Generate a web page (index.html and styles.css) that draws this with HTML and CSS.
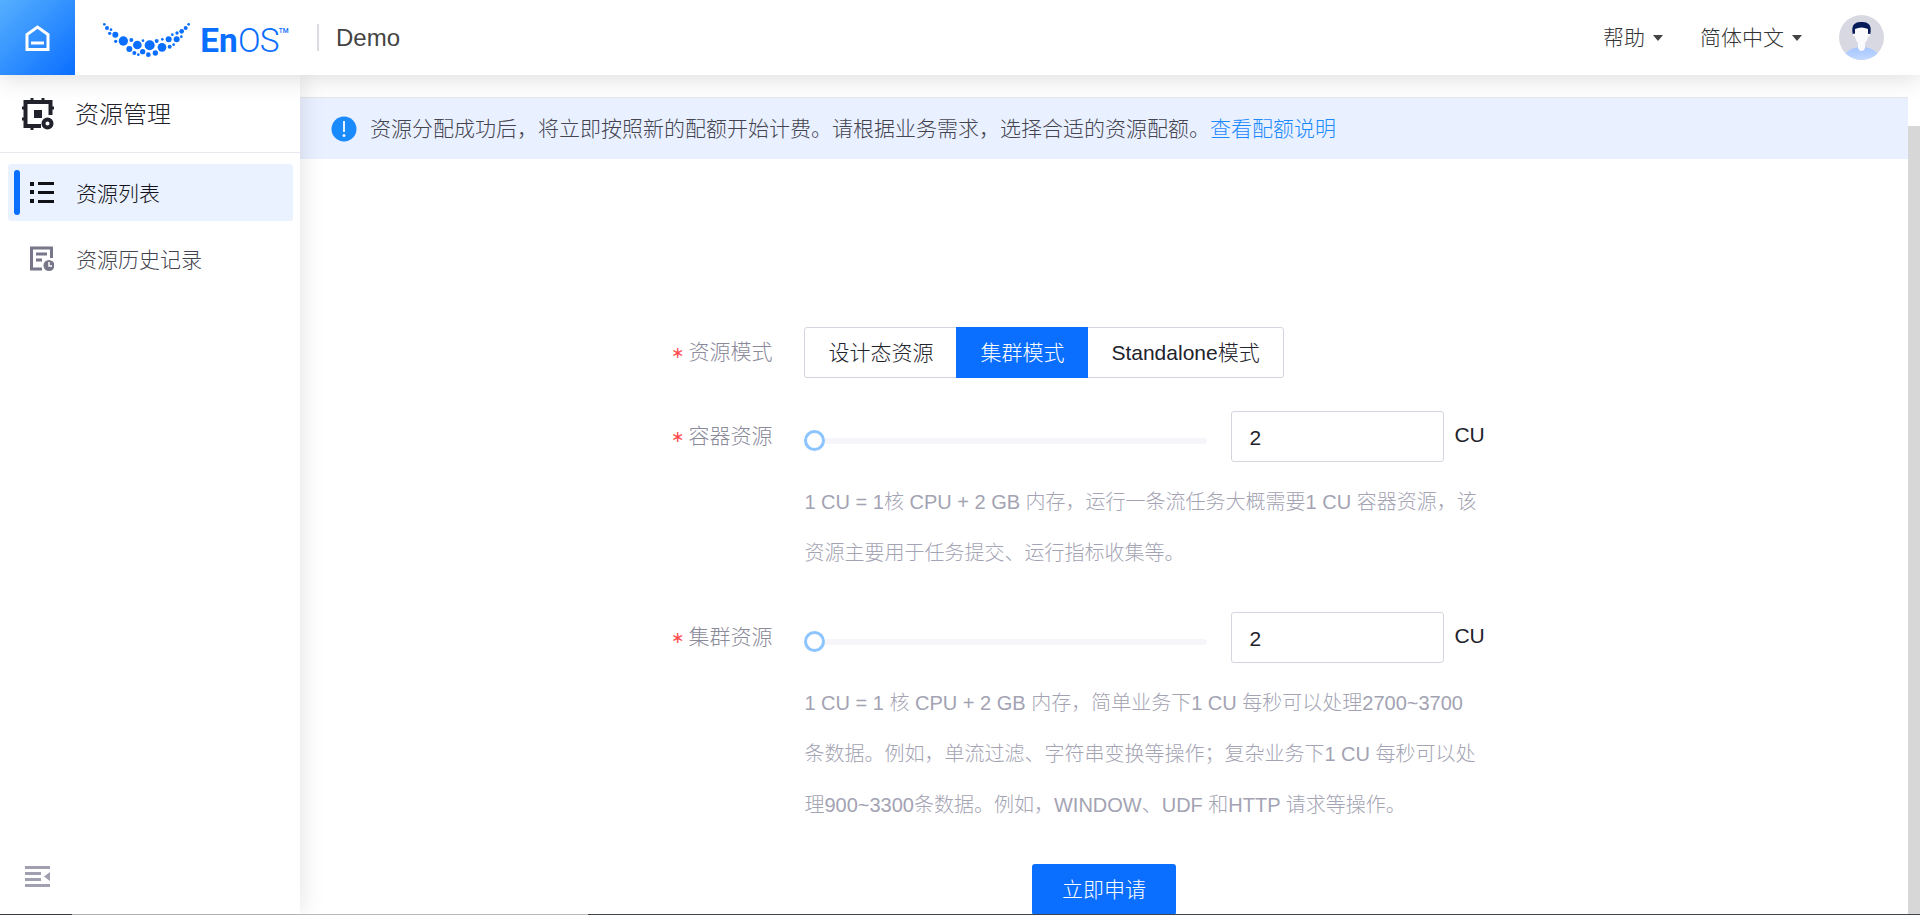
FILE: index.html
```
<!DOCTYPE html>
<html lang="zh-CN">
<head>
<meta charset="utf-8">
<meta name="viewport" content="width=device-width, initial-scale=1">
<title>EnOS 资源管理</title>
<link rel="stylesheet" href="styles.css">
</head>
<body>
<div class="app">
  <header class="topbar">
    <a class="home" href="#" aria-label="首页">
      <svg width="25" height="26" viewBox="0 0 25 26" fill="none" stroke="#fff"><path d="M2 24.500V9.500L12.500 2 23 9.500V24.500Z" stroke-width="3"/><path d="M6 18H19" stroke-width="3"/></svg>
    </a>
    <svg class="logo" width="192" height="40" viewBox="300 60 576 120" role="img" aria-label="EnOS">
      <g fill="#0a6eff">
        <circle cx="313" cy="73" r="4"/><circle cx="321" cy="84" r="6"/><circle cx="333" cy="89" r="4"/><circle cx="329" cy="100" r="5"/>
        <circle cx="346" cy="104" r="9"/><circle cx="347" cy="124" r="5"/><circle cx="370" cy="123" r="14"/><circle cx="394" cy="120" r="6"/>
        <circle cx="388" cy="147" r="9"/><circle cx="412" cy="135" r="13"/><circle cx="403" cy="159" r="6"/><circle cx="429" cy="122" r="4"/>
        <circle cx="415" cy="164" r="4"/><circle cx="428" cy="155" r="8"/><circle cx="449" cy="136" r="15"/><circle cx="445" cy="164" r="7"/>
        <circle cx="470" cy="123" r="6"/><circle cx="466" cy="159" r="8"/><circle cx="486" cy="142" r="13"/><circle cx="487" cy="118" r="4"/>
        <circle cx="506" cy="118" r="9"/><circle cx="509" cy="140" r="6"/><circle cx="517" cy="104" r="4"/><circle cx="530" cy="118" r="9"/>
        <circle cx="521" cy="134" r="4"/><circle cx="531" cy="99" r="5"/><circle cx="545" cy="94" r="7"/><circle cx="544" cy="110" r="4"/>
        <circle cx="557" cy="84" r="6"/><circle cx="566" cy="73" r="4"/>
      </g>
      <text class="logo-bold" x="601" y="155">En</text>
      <text class="logo-light" x="714" y="155">O</text>
      <text class="logo-light" x="779" y="155">S</text>
      <text class="logo-tm" x="836" y="99">TM</text>
    </svg>
    <span class="divider"></span>
    <span class="org">Demo</span>
    <nav class="tools">
      <button class="menu" type="button">帮助<span class="caret"></span></button>
      <button class="menu" type="button">简体中文<span class="caret"></span></button>
      <button class="avatar" type="button" aria-label="用户">
        <svg width="45" height="45" viewBox="0 0 45 45">
          <defs>
            <clipPath id="disc"><circle cx="22.500" cy="22.500" r="22.500"/></clipPath>
            <linearGradient id="shirt" x2="0" y2="1"><stop stop-color="#a3c5ff"/><stop offset="1" stop-color="#c3d9ff"/></linearGradient>
          </defs>
          <g clip-path="url(#disc)">
            <rect width="45" height="45" fill="#d8d8e2"/>
            <path d="M6 45V39Q12 32 22.500 32T39 39V45Z" fill="url(#shirt)"/>
            <path d="M14 20C11 8 18 7 22.500 7S34 8 31 20L29 22H16Z" fill="#061c59"/>
            <path d="M16 14Q22.500 11 29 14V19Q32 18 31 21 30 22 29 22 28 26 26 28V33Q25 36 22.500 36T19 33V28Q17 26 16 22 13 21 14 19 15 18 16 19Z" fill="#fafafc"/>
          </g>
        </svg>
      </button>
    </nav>
  </header>
  <div class="body">
    <aside class="sidebar">
      <div class="side-title">
        <svg width="32" height="32" viewBox="0 0 32 32" fill="none" stroke="#22222c">
          <path d="M19 28H3.500V4H28.500V17" stroke-width="4"/>
          <path d="M10 0V3M21 0V3M0 10H3M0 21H3M10 28V32M29 10H32" stroke-width="3"/>
          <rect x="12" y="12" width="8" height="8" fill="#22222c" stroke="none"/>
          <circle cx="25.500" cy="25.500" r="4" stroke-width="4"/>
        </svg>
        <h1>资源管理</h1>
      </div>
      <nav class="side-nav">
        <a class="nav-item active" href="#" aria-current="page">
          <svg width="24" height="25" viewBox="0 0 24 25" fill="#111118"><path d="M0 2H4V6H0ZM0 10H4V14H0ZM0 19H4V23H0ZM8 2H24V5H8ZM8 11H24V14H8ZM8 20H24V23H8Z"/></svg>
          <span>资源列表</span>
        </a>
        <a class="nav-item" href="#">
          <svg width="24" height="25" viewBox="0 0 24 25" fill="none" stroke="#777789" stroke-width="3"><path d="M12 23H1.500V2H21.500V12M6 8H17M6 14H12"/><circle cx="19" cy="19.500" r="5.500" fill="#777789" stroke="none"/><path d="M19 16V20H22" stroke="#fff" stroke-width="1.500"/></svg>
          <span>资源历史记录</span>
        </a>
      </nav>
      <button class="collapse" type="button" aria-label="收起菜单">
        <svg width="25" height="21" viewBox="0 0 25 21" fill="#a0a0b0"><path d="M0 0H25V3H0ZM0 6H16V9H0ZM0 12H16V15H0ZM0 18H25V21H0ZM25 6V15L19 10.500Z"/></svg>
      </button>
    </aside>
    <main class="main">
      <div class="alert" role="status">
        <svg width="26" height="26" viewBox="0 0 26 26"><circle cx="13" cy="13" r="12.500" fill="#1a8aff"/><path d="M13 5V16" stroke="#e8f1ff" stroke-width="2"/><circle cx="13" cy="19.500" r="1.500" fill="#e8f1ff"/></svg>
        <p>资源分配成功后，将立即按照新的配额开始计费。请根据业务需求，选择合适的资源配额。<a href="#">查看配额说明</a></p>
      </div>
      <form class="form">
        <span class="label" id="mode"><i>∗</i>资源模式</span>
        <div class="segments" role="group" aria-labelledby="mode">
          <button type="button">设计态资源</button>
          <button type="button" class="on" aria-pressed="true">集群模式</button>
          <button type="button">Standalone模式</button>
        </div>
        <label class="label" for="container-cu"><i>∗</i>容器资源</label>
        <div class="field">
          <div class="quota">
            <input class="slider" type="range" min="2" max="100" value="2" aria-label="容器资源">
            <input class="amount" id="container-cu" type="text" value="2">
            <span class="unit">CU</span>
          </div>
          <p class="help">1 CU = 1核 CPU + 2 GB 内存，运行一条流任务大概需要1 CU 容器资源，该资源主要用于任务提交、运行指标收集等。</p>
        </div>
        <label class="label" for="cluster-cu"><i>∗</i>集群资源</label>
        <div class="field">
          <div class="quota">
            <input class="slider" type="range" min="2" max="100" value="2" aria-label="集群资源">
            <input class="amount" id="cluster-cu" type="text" value="2">
            <span class="unit">CU</span>
          </div>
          <p class="help">1 CU = 1 核 CPU + 2 GB 内存，简单业务下1 CU 每秒可以处理2700~3700条数据。例如，单流过滤、字符串变换等操作；复杂业务下1 CU 每秒可以处理900~3300条数据。例如，WINDOW、UDF 和HTTP 请求等操作。</p>
        </div>
        <button class="submit" type="submit">立即申请</button>
      </form>
    </main>
    <div class="scrollbar"></div>
  </div>
  <div class="edge"></div>
</div>
</body>
</html>
```
FILE: styles.css
```
* { box-sizing: border-box; }

body {
  margin: 0;
  color: #22222c;
  background: #fff;
  font: 300 21px/32px "Liberation Sans", "Noto Sans CJK SC", sans-serif;
}

button, input {
  margin: 0;
  padding: 0;
  border: 0;
  background: none;
  color: inherit;
  font: inherit;
}

a { text-decoration: none; }
p, h1 { margin: 0; font-weight: 300; }
svg { display: block; flex: none; }

.app {
  display: flex;
  flex-direction: column;
  height: 100vh;
  overflow: hidden;
}

/* top bar */
.topbar {
  position: relative;
  z-index: 3;
  flex: none;
  display: flex;
  align-items: center;
  height: 75px;
  background: #fff;
  box-shadow: 0 2px 24px rgba(0, 0, 0, 0.15);
}

.home {
  display: grid;
  place-items: center;
  width: 75px;
  height: 75px;
  background: linear-gradient(135deg, #56b0ff, #0a6eff);
}

.logo { margin: 5px 0 0 25px; }
.logo text { fill: #0a6eff; font-family: Roboto, sans-serif; }
.logo .logo-bold { font-size: 100px; font-weight: 700; }
.logo .logo-light { font-size: 100px; font-weight: 300; }
.logo .logo-tm { font-size: 20px; font-weight: 500; }

.divider {
  width: 2px;
  height: 27px;
  margin: 0 17px 0 25px;
  background: #dcdce0;
}

.org { color: #444; font-size: 24px; }

.tools {
  display: flex;
  align-items: center;
  gap: 37px;
  margin: 0 36px 0 auto;
}

.menu {
  display: flex;
  align-items: center;
  gap: 8px;
  color: #333;
}

.caret {
  border: 5px solid transparent;
  border-top: 6px solid #444;
  border-bottom: 0;
}

/* columns under the top bar */
.body { flex: 1; display: flex; min-height: 0; }

.sidebar {
  position: relative;
  z-index: 2;
  flex: none;
  display: flex;
  flex-direction: column;
  width: 300px;
  background: #fff;
  box-shadow: 0 0 24px rgba(0, 0, 0, 0.12);
}

.side-title {
  display: flex;
  align-items: center;
  gap: 21px;
  height: 78px;
  padding-left: 22px;
  border-bottom: 1px solid #e9e9ef;
}

.side-title h1 { padding-top: 2px; font-size: 24px; }

.side-nav {
  flex: 1;
  display: flex;
  flex-direction: column;
  gap: 9px;
  padding: 11px 7px 0 8px;
}

.nav-item {
  position: relative;
  display: flex;
  align-items: center;
  gap: 22px;
  height: 57px;
  padding-left: 22px;
  border-radius: 3px;
  color: #444450;
}

.nav-item span { padding-top: 2px; }

.nav-item.active { background: #ebf2ff; color: #111118; }

.nav-item.active::before {
  content: "";
  position: absolute;
  inset: 6px auto 6px 6px;
  width: 6px;
  border-radius: 3px;
  background: #0a6eff;
}

.collapse { align-self: flex-start; margin: 0 0 27px 25px; }

.main { flex: 1; min-width: 0; padding-top: 22px; overflow: hidden; }

.alert {
  display: flex;
  align-items: center;
  gap: 13px;
  height: 62px;
  padding-left: 31px;
  border-top: 1px solid #e4e6ea;
  background: #e9f0ff;
  color: #444450;
}

.alert a { color: #1a8aff; }

/* quota form */
.form {
  display: grid;
  grid-template-columns: auto 1fr;
  gap: 33px 32px;
  max-width: 866px;
  margin: 168px auto 0;
}

.label {
  display: flex;
  align-items: center;
  gap: 4px;
  height: 50px;
  color: #8a8a9a;
}

.label i {
  color: #ff4d4f;
  font: 16px "DejaVu Sans", sans-serif;
}

.segments {
  display: flex;
  justify-self: start;
  height: 51px;
  border: 1px solid #d5d5e0;
  border-radius: 3px;
}

.segments button { padding: 0 23px; }
.segments .on { margin: -1px 0; padding: 0 24px; background: #0a6eff; color: #fff; }

.quota { display: flex; height: 51px; }

.slider {
  flex: 0 1 403px;
  min-width: 0;
  height: 21px;
  margin: 19px 24px 0 0;
  appearance: none;
}

.slider::-webkit-slider-runnable-track {
  height: 6px;
  border-radius: 3px;
  background: #f5f5fa;
}

.slider::-webkit-slider-thumb {
  width: 21px;
  height: 21px;
  margin-top: -8px;
  border: 3px solid #8cc5ff;
  border-radius: 50%;
  background: #fff;
  appearance: none;
}

.amount {
  width: 213px;
  padding: 2px 17px 0;
  border: 1px solid #d5d5e0;
  border-radius: 3px;
}

.unit { margin-left: 10px; line-height: 48px; }

.help {
  max-width: 676px;
  margin-top: 15px;
  color: #a3a3b3;
  font-size: 20px;
  line-height: 51px;
}

.submit {
  grid-column: 1 / -1;
  justify-self: center;
  width: 144px;
  height: 51px;
  border-radius: 3px;
  background: #0a6eff;
  color: #fff;
}

.scrollbar { flex: none; width: 12px; margin-top: 51px; background: #d7d7d7; }

.edge {
  flex: none;
  height: 1px;
  background: linear-gradient(90deg, #3e3e48 72px, #bbb 72px 588px, #3c464c 588px);
}
```
